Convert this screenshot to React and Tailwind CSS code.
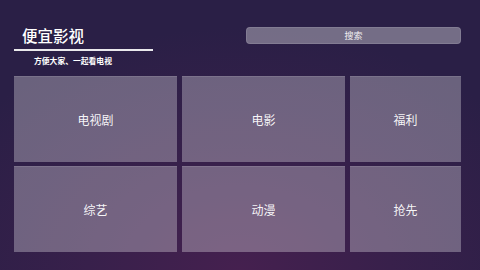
import React from "react";

const tiles = ["电视剧", "电影", "福利", "综艺", "动漫", "抢先"];

export default function App() {
  return (
    <div
      className="w-[480px] h-[270px] overflow-hidden bg-[radial-gradient(ellipse_70%_90%_at_50%_100%,#45204f_0%,#38204b_45%,#2a1f46_100%)] text-white"
      style={{ fontFamily: '"Noto Sans CJK SC", "Noto Sans", sans-serif' }}
    >
      <div className="flex justify-between h-[76px] pl-[14px] pr-[19px]">
        <div className="w-[139px] flex flex-col">
          <div className="pt-[27px] pl-[8px] text-[15.5px] leading-[17px] font-medium">便宜影视</div>
          <div className="mt-[5px] h-[1.5px] bg-white/90"></div>
          <div className="mt-[6px] pl-[20px] text-[7.8px] leading-[8px] font-bold">方便大家、一起看电视</div>
        </div>
        <div className="mt-[27px] w-[215px] h-[17px] rounded-[4px] bg-white/35 border border-white/10 flex items-center justify-center text-[9px] leading-[9px] text-white/90">
          搜索
        </div>
      </div>
      <div className="grid grid-cols-[163px_163px_111px] grid-rows-[86px_86px] gap-x-[5px] gap-y-[4px] pl-[14px]">
        {tiles.map((t) => (
          <div
            key={t}
            className="bg-white/30 border-t border-white/10 flex items-center justify-center text-[12px] leading-[12px] text-white/95"
          >
            {t}
          </div>
        ))}
      </div>
    </div>
  );
}
